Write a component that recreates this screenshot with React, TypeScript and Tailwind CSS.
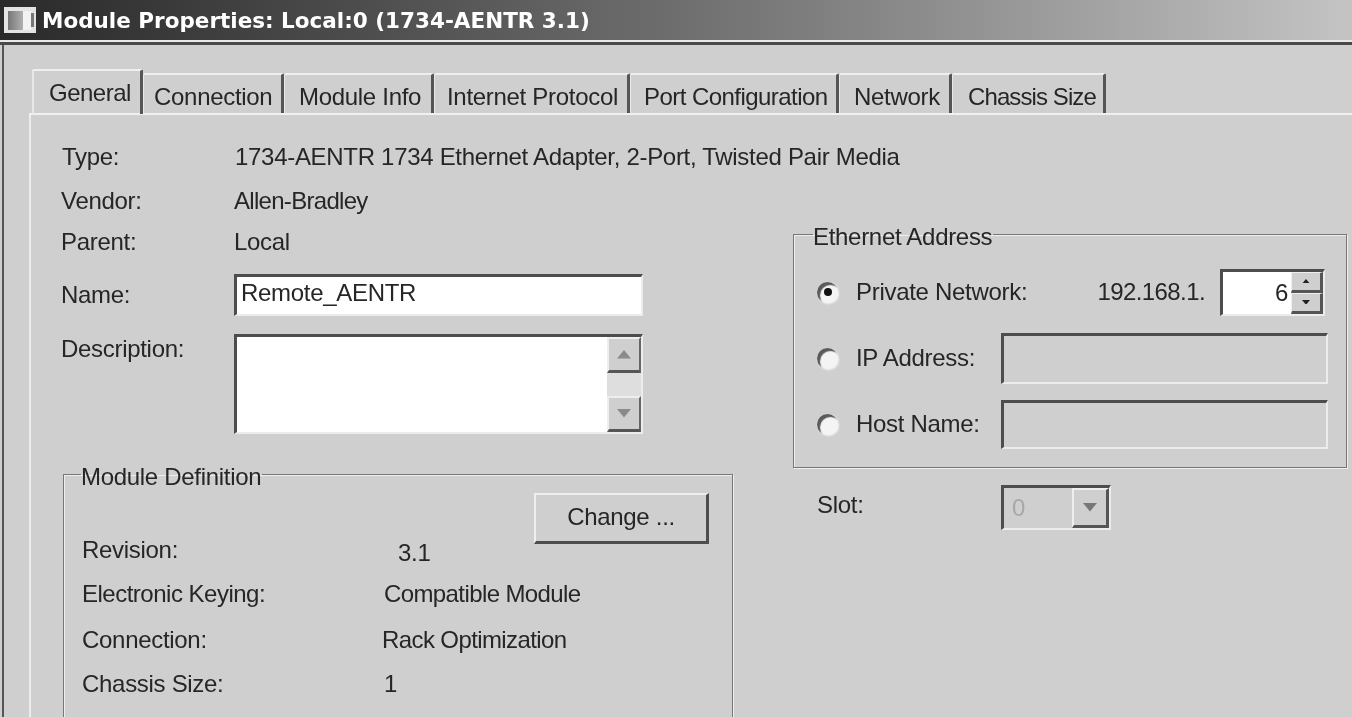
import React from "react";

const font = "font-['Liberation_Sans',sans-serif] text-[24px] leading-[30px] text-[#262626] tracking-[-0.3px]";

function Tab({ label, w, pl, active }: { label: string; w: string; pl: string; active?: boolean }) {
  return (
    <div
      className={`${w} ${pl} ${active ? "h-[45px] pt-[7px] border-l-2 z-10 -mb-px" : "h-[40px] pt-[7px] border-l-[1px]"} shrink-0 border-t-2 border-t-[#efefef] border-l-[#e8e8e8] border-r-[3px] border-r-[#555] whitespace-nowrap rounded-t-[2px]`}
    >
      {label}
    </div>
  );
}

function Sunken({ className, children }: { className: string; children?: React.ReactNode }) {
  return (
    <div className={`${className} border-t-[3px] border-l-[3px] border-t-[#4d4d4d] border-l-[#4d4d4d] border-b-2 border-r-2 border-b-[#ececec] border-r-[#ececec]`}>
      {children}
    </div>
  );
}

function Arrow({ up, color = "#666", size = 14 }: { up?: boolean; color?: string; size?: number }) {
  return (
    <svg width={size} height={size * 0.6} viewBox="0 0 10 6">
      <path d={up ? "M5 0L10 6H0Z" : "M0 0H10L5 6Z"} fill={color} />
    </svg>
  );
}

function ScrollBtn({ up, className }: { up?: boolean; className: string }) {
  return (
    <div className={`${className} flex items-center justify-center bg-[#cfcfcf] border-t-2 border-l-2 border-t-[#eee] border-l-[#eee] border-b-[3px] border-r-2 border-b-[#555] border-r-[#666]`}>
      <Arrow up={up} color="#8a8a8a" />
    </div>
  );
}

function SpinBtn({ up }: { up?: boolean }) {
  return (
    <div className="flex-1 flex items-center justify-center bg-[#cfcfcf] border-t border-l border-t-[#efefef] border-l-[#efefef] border-b-[3px] border-b-[#555] border-r-[3px] border-r-[#555]">
      <Arrow up={up} color="#222" size={8} />
    </div>
  );
}

function Radio({ checked }: { checked?: boolean }) {
  return (
    <div className="w-[21px] h-[21px] shrink-0 rounded-full flex items-center justify-center bg-[#f4f4f4] shadow-[inset_3px_3px_1px_#5a5a5a,1px_1px_2px_#f4f4f4]">
      {checked && <div className="w-[8px] h-[8px] rounded-full bg-[#111]" />}
    </div>
  );
}

function Row({ label, value, cls, vcls = "" }: { label: string; value: string; cls: string; vcls?: string }) {
  return (
    <div className={`flex h-[30px] ${cls}`}>
      <div className="w-[173px] shrink-0 whitespace-nowrap">{label}</div>
      <div className={`whitespace-nowrap ${vcls}`}>{value}</div>
    </div>
  );
}

export default function App() {
  return (
    <div className={`w-[1352px] h-[717px] overflow-hidden bg-[#cfcfcf] flex flex-col blur-[0.5px] ${font}`}>
      {/* title bar */}
      <div className="h-[40px] shrink-0 flex items-center pl-[4px] bg-gradient-to-r from-[#2a2a2a] via-[#6e6e6e] to-[#c4c4c4]">
        <svg width="32" height="26" viewBox="0 0 32 26" className="shrink-0">
          <defs>
            <linearGradient id="ico" x1="0" x2="1" y1="0" y2="0">
              <stop offset="0" stopColor="#777" />
              <stop offset="1" stopColor="#b0b0b0" />
            </linearGradient>
          </defs>
          <rect x="0" y="0" width="32" height="26" fill="#e4e4e4" />
          <rect x="4" y="4" width="15" height="19" fill="url(#ico)" />
          <rect x="19" y="4" width="8" height="19" fill="#f2f2f2" />
          <rect x="27" y="6" width="3" height="14" fill="#777" />
        </svg>
        <span className="ml-[6px] mt-[2px] font-['DejaVu_Sans',sans-serif] font-bold text-[21.5px] tracking-[0px] text-white whitespace-nowrap">
          Module Properties: Local:0 (1734-AENTR 3.1)
        </span>
      </div>
      <div className="h-[2px] shrink-0 bg-[#e8e8e8]" />
      <div className="h-[3px] shrink-0 bg-[#4a4a4a]" />

      {/* client */}
      <div className="flex-1 min-h-0 border-l-2 border-l-[#555] ml-[2px] pl-[25px] pt-[26px]">
        {/* tabs */}
        <div className="flex items-end h-[44px] pl-[3px] border-b-2 border-b-[#f0f0f0]">
          <Tab label="General" w="w-[111px]" pl="pl-[15px] tracking-[-0.5px]" active />
          <Tab label="Connection" w="w-[141px]" pl="pl-[10px]" />
          <Tab label="Module Info" w="w-[150px]" pl="pl-[14px]" />
          <Tab label="Internet Protocol" w="w-[196px]" pl="pl-[12px]" />
          <Tab label="Port Configuration" w="w-[209px]" pl="pl-[13px] tracking-[-0.55px]" />
          <Tab label="Network" w="w-[113px]" pl="pl-[14px]" />
          <Tab label="Chassis Size" w="w-[154px]" pl="pl-[15px] tracking-[-0.9px]" />
        </div>

        {/* page */}
        <div className="border-l-2 border-l-[#ececec] h-[602px] pl-[31px] pt-[27px]">
          <Row label="Type:" value="1734-AENTR 1734 Ethernet Adapter, 2-Port, Twisted Pair Media" cls="" />
          <div className="flex">
            {/* left */}
            <div className="w-[670px] shrink-0 -ml-[1px]">
              <Row label="Vendor:" value="Allen-Bradley" cls="mt-[14px]" vcls="tracking-[-0.7px]" />
              <Row label="Parent:" value="Local" cls="mt-[11px]" />
              <div className="flex mt-[17px] items-center">
                <div className="w-[173px] shrink-0">Name:</div>
                <Sunken className="w-[409px] h-[42px] bg-white pl-[4px] pt-[1px]">Remote_AENTR</Sunken>
              </div>
              <div className="flex mt-[18px]">
                <div className="w-[173px] shrink-0">Description:</div>
                <Sunken className="w-[409px] h-[100px] bg-white flex justify-end">
                  <div className="w-[34px] flex flex-col justify-between bg-[#dedede]">
                    <ScrollBtn up className="h-[36px]" />
                    <ScrollBtn className="h-[36px]" />
                  </div>
                </Sunken>
              </div>
              <fieldset className="mt-[22px] ml-[2px] w-[670px] h-[300px] border border-[#777] shadow-[1px_1px_0_#eee,inset_1px_1px_0_#eee] pl-[18px] pr-[23px]">
                <legend className="ml-[-1px] pr-[1px] pt-[6px] h-[36px]">Module Definition</legend>
                <div className="flex justify-end mt-[1px]">
                  <div className="w-[175px] h-[51px] flex items-center justify-center pb-[2px] border-t-2 border-l-2 border-t-[#efefef] border-l-[#efefef] border-b-[3px] border-r-[3px] border-b-[#4d4d4d] border-r-[#4d4d4d]">
                    Change ...
                  </div>
                </div>
                <div className="flex h-[30px] mt-[-9px]">
                  <div className="w-[316px]">Revision:</div>
                  <div className="mt-[3px]">3.1</div>
                </div>
                <div className="flex h-[30px] mt-[14px]">
                  <div className="w-[302px] tracking-[-0.5px]">Electronic Keying:</div>
                  <div className="tracking-[-0.6px]">Compatible Module</div>
                </div>
                <div className="flex h-[30px] mt-[16px]">
                  <div className="w-[300px]">Connection:</div>
                  <div className="tracking-[-0.6px]">Rack Optimization</div>
                </div>
                <div className="flex h-[30px] mt-[14px]">
                  <div className="w-[300px]">Chassis Size:</div>
                  <div className="ml-[2px]">1</div>
                </div>
              </fieldset>
            </div>

            {/* right */}
            <div className="ml-[62px] mt-[44px] w-[554px] shrink-0">
              <fieldset className="h-[252px] border border-[#777] shadow-[1px_1px_0_#eee,inset_1px_1px_0_#eee] pl-[23px] pr-[18px]">
                <legend className="ml-[-4px] pr-[1px] pt-[6px] h-[36px]">Ethernet Address</legend>
                <div className="flex items-center h-[50px] mt-[15px]">
                  <Radio checked />
                  <span className="ml-[18px] whitespace-nowrap">Private Network:</span>
                  <span className="ml-auto mr-[15px] tracking-[-0.6px]">192.168.1.</span>
                  <Sunken className="w-[105px] h-[47px] mr-[3px] bg-white flex items-center justify-end">
                    <span className="mr-[3px]">6</span>
                    <div className="w-[32px] h-full flex flex-col shrink-0">
                      <SpinBtn up />
                      <SpinBtn />
                    </div>
                  </Sunken>
                </div>
                <div className="flex items-center h-[50px] mt-[16px]">
                  <Radio />
                  <span className="ml-[18px] whitespace-nowrap">IP Address:</span>
                  <Sunken className="ml-auto w-[327px] h-[51px]" />
                </div>
                <div className="flex items-center h-[50px] mt-[16px]">
                  <Radio />
                  <span className="ml-[18px] whitespace-nowrap">Host Name:</span>
                  <Sunken className="ml-auto w-[327px] h-[49px]" />
                </div>
              </fieldset>
              <div className="flex items-center mt-[17px] pl-[24px] h-[45px]">
                <div className="w-[184px] mb-[6px]">Slot:</div>
                <Sunken className="w-[110px] h-[45px] flex items-center justify-between pl-[8px] text-[#a8a8a8]">
                  <span>0</span>
                  <div className="w-[37px] h-full flex items-center justify-center border-b-[3px] border-r-[3px] border-b-[#555] border-r-[#555] border-l-2 border-t-2 border-l-[#eee] border-t-[#eee]">
                    <Arrow color="#777" />
                  </div>
                </Sunken>
              </div>
            </div>
          </div>
        </div>
      </div>
    </div>
  );
}
